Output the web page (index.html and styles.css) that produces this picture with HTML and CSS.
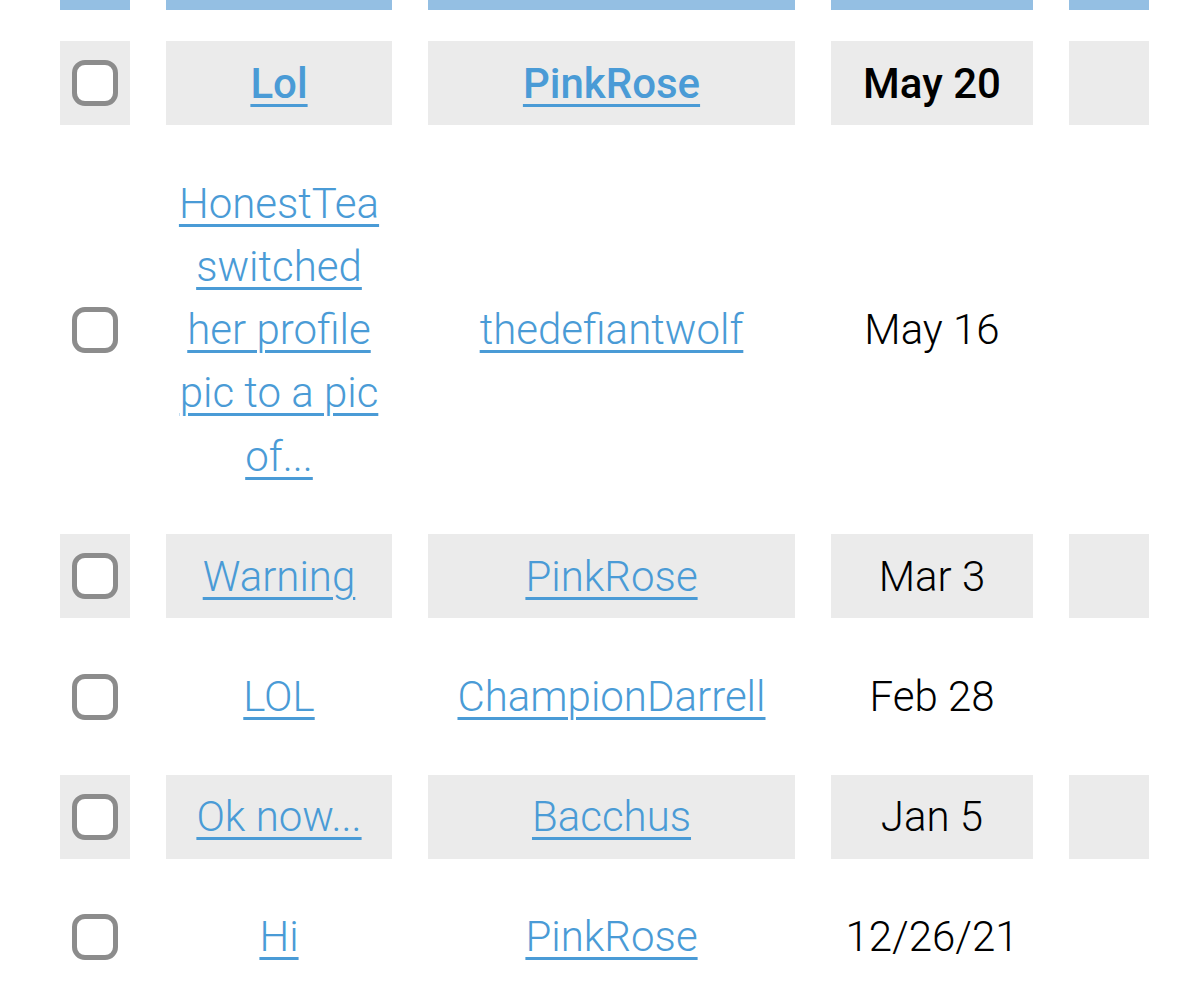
FILE: index.html
```html
<!DOCTYPE html>
<html lang="en">
<head>
  <meta charset="UTF-8" />
  <meta name="viewport" content="width=device-width, initial-scale=1.0" />
  <title>Inbox</title>
  <link rel="stylesheet" href="styles.css">
</head>
<body>
  <table class="inbox">
    <colgroup>
      <col class="col-pick">
      <col class="col-subject">
      <col class="col-from">
      <col class="col-date">
      <col class="col-extra">
    </colgroup>
    <thead>
      <tr>
        <th></th>
        <th></th>
        <th></th>
        <th></th>
        <th></th>
      </tr>
    </thead>
    <tbody>
      <tr class="unread">
        <td><input type="checkbox" class="pick"></td>
        <td><a href="#">Lol</a></td>
        <td><a href="#">PinkRose</a></td>
        <td>May 20</td>
        <td></td>
      </tr>
      <tr>
        <td><input type="checkbox" class="pick"></td>
        <td><a href="#">HonestTea switched her profile pic to a pic of...</a></td>
        <td><a href="#">thedefiantwolf</a></td>
        <td>May 16</td>
        <td></td>
      </tr>
      <tr>
        <td><input type="checkbox" class="pick"></td>
        <td><a href="#">Warning</a></td>
        <td><a href="#">PinkRose</a></td>
        <td>Mar 3</td>
        <td></td>
      </tr>
      <tr>
        <td><input type="checkbox" class="pick"></td>
        <td><a href="#">LOL</a></td>
        <td><a href="#">ChampionDarrell</a></td>
        <td>Feb 28</td>
        <td></td>
      </tr>
      <tr>
        <td><input type="checkbox" class="pick"></td>
        <td><a href="#">Ok now...</a></td>
        <td><a href="#">Bacchus</a></td>
        <td>Jan 5</td>
        <td></td>
      </tr>
      <tr>
        <td><input type="checkbox" class="pick"></td>
        <td><a href="#">Hi</a></td>
        <td><a href="#">PinkRose</a></td>
        <td>12/26/21</td>
        <td></td>
      </tr>
    </tbody>
  </table>
</body>
</html>
```

FILE: styles.css
```css
html, body { overflow: hidden; }
body { margin: 0; background: #fff; color: #000; font-family: Roboto, "Noto Sans", sans-serif; font-weight: 300; }
.inbox { table-layout: fixed; width: 1161px; margin: -41px 0 0 24px; border-collapse: separate; border-spacing: 36px; }
.col-pick { width: 70px; }
.col-subject { width: 226px; }
.col-from { width: 367px; }
.col-date { width: 202px; }
.col-extra { width: 80px; }
.inbox th { position: sticky; top: 0; height: 10px; padding: 0; background: #94bfe3; }
.inbox td { padding: 10.5px 0; font-size: 42px; line-height: 63.2px; text-align: center; vertical-align: middle; }
.inbox tbody tr:nth-child(odd) td { background: #ebebeb; }
.inbox a { color: #4a9bd6; text-decoration: underline; text-underline-offset: 6px; text-decoration-thickness: 3px; }
.unread td { font-weight: 500; }
.pick { appearance: none; display: block; margin: 0 auto; width: 46px; height: 46px; border: 5px solid #8c8c8c; border-radius: 13px; background: #fff; }
```
